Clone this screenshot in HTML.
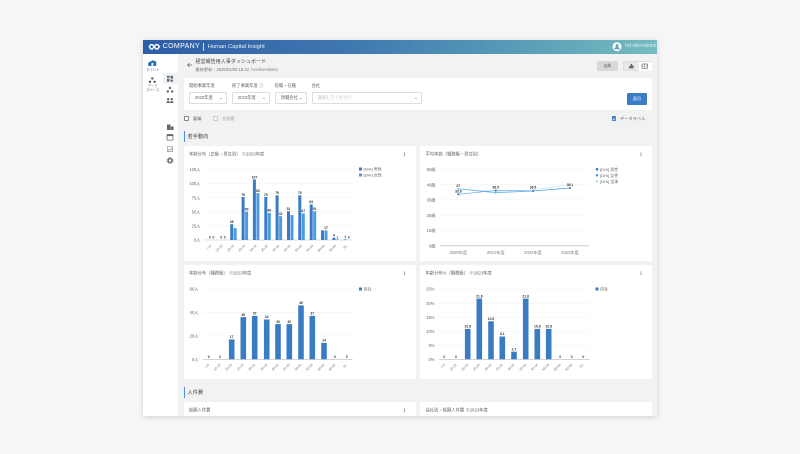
<!DOCTYPE html>
<html lang="ja"><head><meta charset="utf-8"><title>経営報告用人事ダッシュボード</title>
<style>
html,body{margin:0;padding:0;width:800px;height:454px;overflow:hidden;background:#f6f6f6;font-family:"Liberation Sans","Noto Sans CJK JP",sans-serif}
#s{position:absolute;left:143px;top:40px;width:514px;height:376px;box-shadow:0 1px 5px rgba(0,0,0,.16)}
#w{position:absolute;left:143px;top:40px;width:514px;height:376px;background:#f2f2f2;overflow:hidden;filter:blur(.3px)}
.a{position:absolute;white-space:nowrap}
.card{position:absolute;background:#fff}
.sel{position:absolute;top:52px;height:12px;background:#fff;border:1px solid #ddd;border-radius:1.5px;box-sizing:border-box;font-size:4.3px;color:#666;line-height:10px;padding-left:5px}
.sel:after{content:"";position:absolute;right:3.5px;top:4.5px;border:1.2px solid transparent;border-top:1.5px solid #777}
.lb{position:absolute;top:43px;font-size:4.3px;color:#666;white-space:nowrap}
svg{position:absolute;left:0;top:0}
svg text{font-family:"Liberation Sans","Noto Sans CJK JP",sans-serif}
.m{fill:#3a7cc4}.f{fill:#4a9be0}
.g{stroke:#f1f1f1;stroke-width:.5}
.ax{stroke:#bbb;stroke-width:.6}
.y{font-size:4.2px;fill:#666;text-anchor:end}
.v{font-size:3.4px;fill:#333;font-weight:bold;text-anchor:middle}
.x{font-size:3.3px;fill:#777;text-anchor:end}
.l{font-size:4px;fill:#666}
.t{font-size:4.3px;fill:#666}
.d{fill:#666}
</style></head><body>
<div id="s"></div>
<div id="w">
<div class="a" style="left:0;top:0;width:514px;height:14px;background:linear-gradient(90deg,#2d5da6 0%,#3f77b0 40%,#5a9fb8 75%,#76bcc0 100%)"></div>
<svg width="514" height="14" style="left:0;top:0" viewBox="0 0 514 14"><g fill="none" stroke="#fff" stroke-width="1.400"><path d="M7.700 4.700h1.800l1.700 2-1.700 2.200H7.700L6.300 6.700z"/><path d="M13 4.700h1.800l1.500 2-1.500 2.200H13l-1.800-2.200z"/></g><circle cx="474" cy="6.700" r="4.500" fill="#fff"/><circle cx="474" cy="5.600" r="1.500" fill="#5ca3b8"/><path d="M471 9.300a3 2.300 0 0 1 6 0z" fill="#5ca3b8"/></svg>
<div class="a" style="left:19.700px;top:1.300px;font-size:7px;line-height:11px;color:#fff;letter-spacing:.35px">COMPANY</div>
<div class="a" style="left:60.300px;top:3px;width:.5px;height:8px;background:#cfe0ee"></div>
<div class="a" style="left:64.700px;top:2.800px;font-size:5.800px;line-height:8px;color:#e8f1f6">Human Capital Insight</div>
<div class="a" style="left:482px;top:3.200px;font-size:5px;line-height:7px;color:#e6f2f4">hci-dev+demo</div>

<div class="a" style="left:0;top:14px;width:19.500px;height:362px;background:#fff"></div>
<div class="a" style="left:19.500px;top:14px;width:.5px;height:362px;background:#ececec"></div>
<div class="a" style="left:20px;top:14px;width:15px;height:362px;background:#fff"></div>
<div class="a" style="left:20px;top:33px;width:15px;height:11px;background:#eef3f9"></div>
<svg width="40" height="140" viewBox="0 0 40 140" style="left:0;top:0">
<path d="M5.200 26v-3.200l4.500-2.500 3.500 1.200V26z" fill="#2d6fb5"/><rect x="8.500" y="23" width="1.800" height="3" fill="#fff"/>
<g fill="#555"><circle cx="9.300" cy="38.400" r="1.200"/><circle cx="7" cy="41.800" r="1.200"/><circle cx="11.600" cy="41.800" r="1.200"/></g>
<g transform="translate(0 -1.200)" fill="#666"><rect x="24" y="37" width="2.500" height="2"/><rect x="27.500" y="37" width="2.500" height="2.800"/><rect x="24" y="40" width="2.500" height="2.800"/><rect x="27.500" y="40.800" width="2.500" height="2"/></g>
<g transform="translate(0 -2)" fill="#666"><circle cx="27" cy="50" r="1.200"/><circle cx="24.800" cy="53.500" r="1.200"/><circle cx="29.200" cy="53.500" r="1.200"/></g>
<g transform="translate(0 -2)" fill="#666"><circle cx="25.200" cy="61.200" r="1.200"/><circle cx="28.800" cy="61.200" r="1.200"/><path d="M23.500 65a1.700 2 0 0 1 3.400 0zM27.100 65a1.700 2 0 0 1 3.400 0z"/></g>
<path d="M24 90v-5.500h3.500V90zM27.800 90v-3.500h2.700V90z" fill="#666"/>
<g transform="translate(0 -1.500)"><rect x="24" y="96" width="6" height="5.600" rx=".6" fill="none" stroke="#666" stroke-width=".8"/><rect x="24" y="96" width="6" height="1.600" fill="#666"/></g>
<g transform="translate(0 -2)"><path d="M24.400 108.500h5.200v5.200h-5.200z" fill="none" stroke="#888" stroke-width=".6"/><path d="M25 113l1.500-2 1.300 1 1.500-2.500" fill="none" stroke="#888" stroke-width=".6"/></g>
<circle cx="27" cy="120.500" r="1.900" fill="none" stroke="#666" stroke-width="1.300"/><circle cx="27" cy="120.500" r="3" fill="none" stroke="#666" stroke-width=".8" stroke-dasharray="1 .9"/>
</svg>
<div class="a" style="left:0;top:26.700px;width:19.500px;text-align:center;font-size:3.400px;color:#2d6fb5">マイハト</div>
<div class="a" style="left:0;top:43.500px;width:19.500px;text-align:center;font-size:3.400px;line-height:4.600px;color:#666">ワーク<br>スペース</div>

<svg width="10" height="10" viewBox="0 0 10 10" style="left:43px;top:20px"><path d="M6 5H1.500M3.500 3L1.500 5l2 2" fill="none" stroke="#666" stroke-width=".7"/></svg>
<div class="a" style="left:52.500px;top:18px;font-size:5.050px;line-height:8px;color:#444">経営報告用人事ダッシュボード</div>
<div class="a" style="left:52.500px;top:27px;font-size:4.200px;line-height:5px;color:#777">最終更新：2025/04/08 18:42&nbsp; hci-dev+demo</div>
<div class="a" style="left:454px;top:21px;width:20.500px;height:10px;background:#d8d8d8;border-radius:1px;text-align:center;font-size:3.800px;line-height:10px;color:#555">出典</div>
<div class="a" style="left:479.500px;top:21px;width:29px;height:10px;background:#e9e9e9;border:.5px solid #ddd;box-sizing:border-box;border-radius:1px"><div class="a" style="left:15px;top:0;width:13.500px;height:9px;background:#fff"></div></div>
<svg width="30" height="10" viewBox="0 0 30 10" style="left:479.500px;top:21px"><path d="M5.500 7.300h5M6.300 7V5.200h1V7zM7.800 7V3h1v4zM9.300 7V4.500h1V7z" fill="#555" stroke="#555" stroke-width=".3"/><rect x="19" y="3" width="5.500" height="4.300" rx=".4" fill="none" stroke="#666" stroke-width=".7"/><path d="M19 5.100h5.500M21.700 3v4.300" stroke="#666" stroke-width=".4"/></svg>

<div class="card" style="left:41px;top:38px;width:467.500px;height:32px"></div>
<div class="lb" style="left:46px;top:43px">開始事業年度</div>
<div class="lb" style="left:89px;top:43px">終了事業年度 ⓘ</div>
<div class="lb" style="left:131.500px;top:43px">役職・在籍</div>
<div class="lb" style="left:168.500px;top:43px">会社</div>
<div class="sel" style="left:45.700px;width:38px">2020年度</div>
<div class="sel" style="left:88.700px;width:38.300px">2023年度</div>
<div class="sel" style="left:131.700px;width:32px">現職会社</div>
<div class="sel" style="left:168.700px;width:110.300px;color:#bbb">選択してください</div>
<div class="a" style="left:483.700px;top:53px;width:20.300px;height:12px;background:#3a7cc8;border-radius:1px;text-align:center;font-size:4.200px;line-height:12px;color:#e6effa">適用</div>

<div class="a" style="left:41px;top:76px;width:4.500px;height:4.500px;border:.7px solid #888;box-sizing:border-box;border-radius:.7px;background:#fff"></div>
<div class="a" style="left:50px;top:75.500px;font-size:4.200px;line-height:6px;color:#666">要職</div>
<div class="a" style="left:70px;top:76px;width:4.500px;height:4.500px;border:.7px solid #ccc;box-sizing:border-box;border-radius:.7px;background:#f7f7f7"></div>
<div class="a" style="left:79px;top:75.500px;font-size:4.200px;line-height:6px;color:#aaa">全階層</div>
<div class="a" style="left:468.500px;top:76px;width:4.700px;height:4.700px;background:#3a7cc8;border-radius:.7px"></div>
<svg width="6" height="6" viewBox="0 0 6 6" style="left:468px;top:75.500px"><path d="M1.700 3l1 1 1.700-1.900" fill="none" stroke="#fff" stroke-width=".6"/></svg>
<div class="a" style="left:477px;top:75.500px;font-size:4.200px;line-height:6px;color:#666">データラベル</div>

<div class="a" style="left:41px;top:91px;width:1px;height:11px;background:#4a8fd8"></div>
<div class="a" style="left:44.500px;top:92.500px;font-size:5.200px;line-height:8px;color:#444">若手動向</div>
<div class="a" style="left:41px;top:347px;width:1px;height:11px;background:#4a8fd8"></div>
<div class="a" style="left:44.500px;top:348.500px;font-size:5.200px;line-height:8px;color:#444">人件費</div>

<div class="card" style="left:41px;top:106px;width:231.500px;height:115px"></div>
<div class="card" style="left:277px;top:106px;width:231.700px;height:115px"></div>
<div class="card" style="left:41px;top:225px;width:231.500px;height:114px"></div>
<div class="card" style="left:277px;top:225px;width:231.700px;height:114px"></div>
<div class="card" style="left:41px;top:362px;width:231.500px;height:20px"></div>
<div class="card" style="left:277px;top:362px;width:231.700px;height:20px"></div>

<svg width="514" height="376" viewBox="143 40 514 376" style="left:0;top:0">
<text class="t" x="189" y="155.500">年齢分布（正級・男女別） ※2023年度</text>
<text class="t" x="425.500" y="155.500">平均年齢（職務級・男女別）</text>
<text class="t" x="189" y="274.500">年齢分布（職務級） ※2023年度</text>
<text class="t" x="425.500" y="274.500">年齢分布%（職務級） ※2023年度</text>
<text class="t" x="189" y="411.500">総額人件費</text>
<text class="t" x="425.500" y="411.500">会社別・総額人件費 ※2023年度</text>
<g class="d"><circle cx="404.500" cy="153" r=".5"/><circle cx="404.500" cy="154.300" r=".5"/><circle cx="404.500" cy="155.600" r=".5"/><circle cx="641" cy="153" r=".5"/><circle cx="641" cy="154.300" r=".5"/><circle cx="641" cy="155.600" r=".5"/><circle cx="404.500" cy="272" r=".5"/><circle cx="404.500" cy="273.300" r=".5"/><circle cx="404.500" cy="274.600" r=".5"/><circle cx="641" cy="272" r=".5"/><circle cx="641" cy="273.300" r=".5"/><circle cx="641" cy="274.600" r=".5"/><circle cx="404.500" cy="409" r=".5"/><circle cx="404.500" cy="410.300" r=".5"/><circle cx="404.500" cy="411.600" r=".5"/></g>

<!-- chart 1 -->
<path class="g" d="M205 169.300H352.700M205 183.400H352.700M205 197.600H352.700M205 211.700H352.700M205 225.900H352.700"/><path class="ax" d="M205 240H352.700"/>
<g class="y"><text x="200.500" y="171">125人</text><text x="200.500" y="185.100">100人</text><text x="200.500" y="199.300">75人</text><text x="200.500" y="213.400">50人</text><text x="200.500" y="227.600">25人</text><text x="200.500" y="241.700">0人</text></g>
<g class="m"><rect x="230.200" y="224.200" width="3" height="15.800"/><rect x="241.600" y="197" width="3" height="43"/><rect x="252.900" y="179.500" width="3" height="60.500"/><rect x="264.300" y="197" width="3" height="43"/><rect x="275.600" y="195.300" width="3" height="44.700"/><rect x="287" y="211.200" width="3" height="28.800"/><rect x="298.300" y="195.300" width="3" height="44.700"/><rect x="309.700" y="204.400" width="3" height="35.600"/><rect x="321" y="230.400" width="3" height="9.600"/><rect x="332.400" y="237.700" width="3" height="2.300"/><rect x="343.700" y="239.400" width="3" height=".6"/></g>
<g class="f"><rect x="233.700" y="228.100" width="3" height="11.900"/><rect x="245.100" y="211.700" width="3" height="28.300"/><rect x="256.400" y="193.100" width="3" height="46.900"/><rect x="267.800" y="212.900" width="3" height="27.100"/><rect x="279.100" y="216.200" width="3" height="23.800"/><rect x="290.500" y="215.100" width="3" height="24.900"/><rect x="301.800" y="213.400" width="3" height="26.600"/><rect x="313.200" y="211.200" width="3" height="28.800"/><rect x="324.500" y="230.400" width="3" height="9.600"/><rect x="335.900" y="239.500" width="3" height=".5"/></g>
<g class="v"><text x="210" y="238.500">0</text><text x="213.400" y="238.500">0</text><text x="221.300" y="238.500">0</text><text x="224.700" y="238.500">0</text><text x="231.700" y="223">28</text><text x="243.100" y="195.800">76</text><text x="246.600" y="210.500">50</text><text x="254.400" y="178.300">107</text><text x="257.900" y="191.900">83</text><text x="265.800" y="195.800">76</text><text x="269.300" y="211.700">48</text><text x="277.100" y="194.100">79</text><text x="280.600" y="215">42</text><text x="288.500" y="210">51</text><text x="299.800" y="194.100">79</text><text x="303.300" y="212.200">47</text><text x="311.200" y="203.200">63</text><text x="314.700" y="210">51</text><text x="326" y="229.200">17</text><text x="333.900" y="236.500">4</text><text x="337.400" y="238.300">1</text><text x="345.200" y="238.200">1</text><text x="348.700" y="238.500">0</text></g>
<g class="x"><text x="211.500" y="246" transform="rotate(-45 211.500 246)">~14</text><text x="222.800" y="246" transform="rotate(-45 222.800 246)">15-19</text><text x="234.200" y="246" transform="rotate(-45 234.200 246)">20-24</text><text x="245.500" y="246" transform="rotate(-45 245.500 246)">25-29</text><text x="256.900" y="246" transform="rotate(-45 256.900 246)">30-34</text><text x="268.200" y="246" transform="rotate(-45 268.200 246)">35-39</text><text x="279.600" y="246" transform="rotate(-45 279.600 246)">40-44</text><text x="290.900" y="246" transform="rotate(-45 290.900 246)">45-49</text><text x="302.300" y="246" transform="rotate(-45 302.300 246)">50-54</text><text x="313.600" y="246" transform="rotate(-45 313.600 246)">55-59</text><text x="325" y="246" transform="rotate(-45 325 246)">60-64</text><text x="336.300" y="246" transform="rotate(-45 336.300 246)">65-69</text><text x="347.700" y="246" transform="rotate(-45 347.700 246)">70-</text></g>
<rect class="m" x="359" y="167.500" width="3" height="3"/><rect class="f" x="359" y="173.500" width="3" height="3"/>
<text class="l" x="363.500" y="170.500">[DHI] 男性</text><text class="l" x="363.500" y="176.500">[DHI] 女性</text>

<!-- chart 2 -->
<path class="g" d="M440 169.300H589M440 184.600H589M440 199.900H589M440 215.100H589M440 230.400H589"/><path stroke="#ccc" stroke-width="1" d="M440 245.700H589"/>
<g class="y"><text x="435.500" y="171">50歳</text><text x="435.500" y="186.300">40歳</text><text x="435.500" y="201.600">30歳</text><text x="435.500" y="216.800">20歳</text><text x="435.500" y="232.100">10歳</text><text x="435.500" y="247.400">0歳</text></g>
<polyline points="458.300,188.800 495.700,191.500 533,189.800 570,184.500" fill="none" stroke="#cde9f7" stroke-width=".8"/>
<polyline points="458.300,188.900 495.700,192.700 533,191 570,188" fill="none" stroke="#6bb8ec" stroke-width=".8"/>
<polyline points="458.300,194.300 495.700,190.500 533,191 570,188" fill="none" stroke="#4a9be0" stroke-width=".6"/>
<g fill="#6bb8ec"><circle cx="458.300" cy="189" r="1"/><circle cx="495.700" cy="192.700" r="1"/></g>
<g fill="#2f74bf"><circle cx="458.300" cy="194.300" r="1"/><circle cx="495.700" cy="190.500" r="1"/><circle cx="533" cy="191" r="1"/><circle cx="570" cy="188" r="1"/></g>
<g class="v"><text x="458.300" y="187">37</text><text x="458.300" y="192.500">33.8</text><text x="495.700" y="188.500">36.5</text><text x="533" y="188.500">36.5</text><text x="570" y="186">38.1</text></g>
<g fill="#777" font-size="4.200" text-anchor="middle"><text x="458.300" y="254">2020年度</text><text x="495.700" y="254">2021年度</text><text x="533" y="254">2022年度</text><text x="570" y="254">2023年度</text></g>
<circle cx="597" cy="169.300" r="1.300" fill="#2f74bf"/><circle cx="597" cy="175.300" r="1.300" fill="#4a9be0"/><circle cx="597" cy="181.300" r="1.300" fill="#bfe3f5"/>
<text class="l" x="600" y="170.800">[DHI] 男性</text><text class="l" x="600" y="176.800">[DHI] 女性</text><text class="l" x="600" y="182.800">[DHI] 全体</text>

<!-- chart 3 -->
<path class="g" d="M203 289H352.700M203 312.400H352.700M203 335.900H352.700"/><path class="ax" d="M203 359.300H352.700"/>
<g class="y"><text x="198.500" y="290.700">60人</text><text x="198.500" y="314.100">40人</text><text x="198.500" y="337.600">20人</text><text x="198.500" y="361">0人</text></g>
<g class="m"><rect x="228.900" y="339.400" width="5.600" height="19.900"/><rect x="240.500" y="317.100" width="5.600" height="42.200"/><rect x="251.900" y="315.900" width="5.600" height="43.400"/><rect x="263.900" y="319.500" width="5.600" height="39.800"/><rect x="275.200" y="324.100" width="5.600" height="35.200"/><rect x="286.500" y="324.100" width="5.600" height="35.200"/><rect x="298.200" y="305.400" width="5.600" height="53.900"/><rect x="309.500" y="315.900" width="5.600" height="43.400"/><rect x="321.200" y="342.900" width="5.600" height="16.400"/></g>
<g class="v"><text x="208.700" y="357.800">0</text><text x="220" y="357.800">0</text><text x="231.700" y="338">17</text><text x="243.300" y="315.800">36</text><text x="254.700" y="314.600">37</text><text x="266.700" y="318.200">34</text><text x="278" y="322.800">30</text><text x="289.300" y="322.800">30</text><text x="301" y="304.100">46</text><text x="312.300" y="314.600">37</text><text x="324" y="341.600">14</text><text x="335" y="357.800">0</text><text x="346.700" y="357.800">0</text></g>
<g class="x"><text x="209.500" y="365" transform="rotate(-45 209.500 365)">~14</text><text x="220.800" y="365" transform="rotate(-45 220.800 365)">15-19</text><text x="232.500" y="365" transform="rotate(-45 232.500 365)">20-24</text><text x="244.100" y="365" transform="rotate(-45 244.100 365)">25-29</text><text x="255.500" y="365" transform="rotate(-45 255.500 365)">30-34</text><text x="267.500" y="365" transform="rotate(-45 267.500 365)">35-39</text><text x="278.800" y="365" transform="rotate(-45 278.800 365)">40-44</text><text x="290.100" y="365" transform="rotate(-45 290.100 365)">45-49</text><text x="301.800" y="365" transform="rotate(-45 301.800 365)">50-54</text><text x="313.100" y="365" transform="rotate(-45 313.100 365)">55-59</text><text x="324.800" y="365" transform="rotate(-45 324.800 365)">60-64</text><text x="335.800" y="365" transform="rotate(-45 335.800 365)">65-69</text><text x="347.500" y="365" transform="rotate(-45 347.500 365)">70-</text></g>
<rect class="m" x="359" y="287.500" width="3" height="3"/><text class="l" x="363.500" y="290.500">自社</text>

<!-- chart 4 -->
<path class="g" d="M439 289H589.700M439 303.100H589.700M439 317.200H589.700M439 331.200H589.700M439 345.300H589.700"/><path class="ax" d="M439 359.300H589.700"/>
<g class="y"><text x="434.500" y="290.700">25%</text><text x="434.500" y="304.800">20%</text><text x="434.500" y="318.900">15%</text><text x="434.500" y="332.900">10%</text><text x="434.500" y="347">5%</text><text x="434.500" y="361">0%</text></g>
<g class="m"><rect x="464.900" y="328.900" width="5.600" height="30.400"/><rect x="476.500" y="298.600" width="5.600" height="60.700"/><rect x="488.200" y="321.300" width="5.600" height="38"/><rect x="499.500" y="336.500" width="5.600" height="22.800"/><rect x="511.200" y="351.700" width="5.600" height="7.600"/><rect x="522.900" y="298.600" width="5.600" height="60.700"/><rect x="534.500" y="328.900" width="5.600" height="30.400"/><rect x="545.900" y="328.900" width="5.600" height="30.400"/></g>
<g class="v"><text x="444.300" y="357.800">0</text><text x="456" y="357.800">0</text><text x="467.700" y="327.600">10.8</text><text x="479.300" y="297.300">21.6</text><text x="491" y="320">13.5</text><text x="502.300" y="335.200">8.1</text><text x="514" y="350.400">2.7</text><text x="525.700" y="297.300">21.6</text><text x="537.300" y="327.600">10.8</text><text x="548.700" y="327.600">10.8</text><text x="560.300" y="357.800">0</text><text x="571.700" y="357.800">0</text><text x="583.300" y="357.800">0</text></g>
<g class="x"><text x="445.100" y="365" transform="rotate(-45 445.100 365)">~14</text><text x="456.800" y="365" transform="rotate(-45 456.800 365)">15-19</text><text x="468.500" y="365" transform="rotate(-45 468.500 365)">20-24</text><text x="480.100" y="365" transform="rotate(-45 480.100 365)">25-29</text><text x="491.800" y="365" transform="rotate(-45 491.800 365)">30-34</text><text x="503.100" y="365" transform="rotate(-45 503.100 365)">35-39</text><text x="514.800" y="365" transform="rotate(-45 514.800 365)">40-44</text><text x="526.500" y="365" transform="rotate(-45 526.500 365)">45-49</text><text x="538.100" y="365" transform="rotate(-45 538.100 365)">50-54</text><text x="549.500" y="365" transform="rotate(-45 549.500 365)">55-59</text><text x="561.100" y="365" transform="rotate(-45 561.100 365)">60-64</text><text x="572.500" y="365" transform="rotate(-45 572.500 365)">65-69</text><text x="584.100" y="365" transform="rotate(-45 584.100 365)">70-</text></g>
<rect class="m" x="595.500" y="287.500" width="3" height="3"/><text class="l" x="600" y="290.500">自社</text>
</svg>
</div>
</body></html>
